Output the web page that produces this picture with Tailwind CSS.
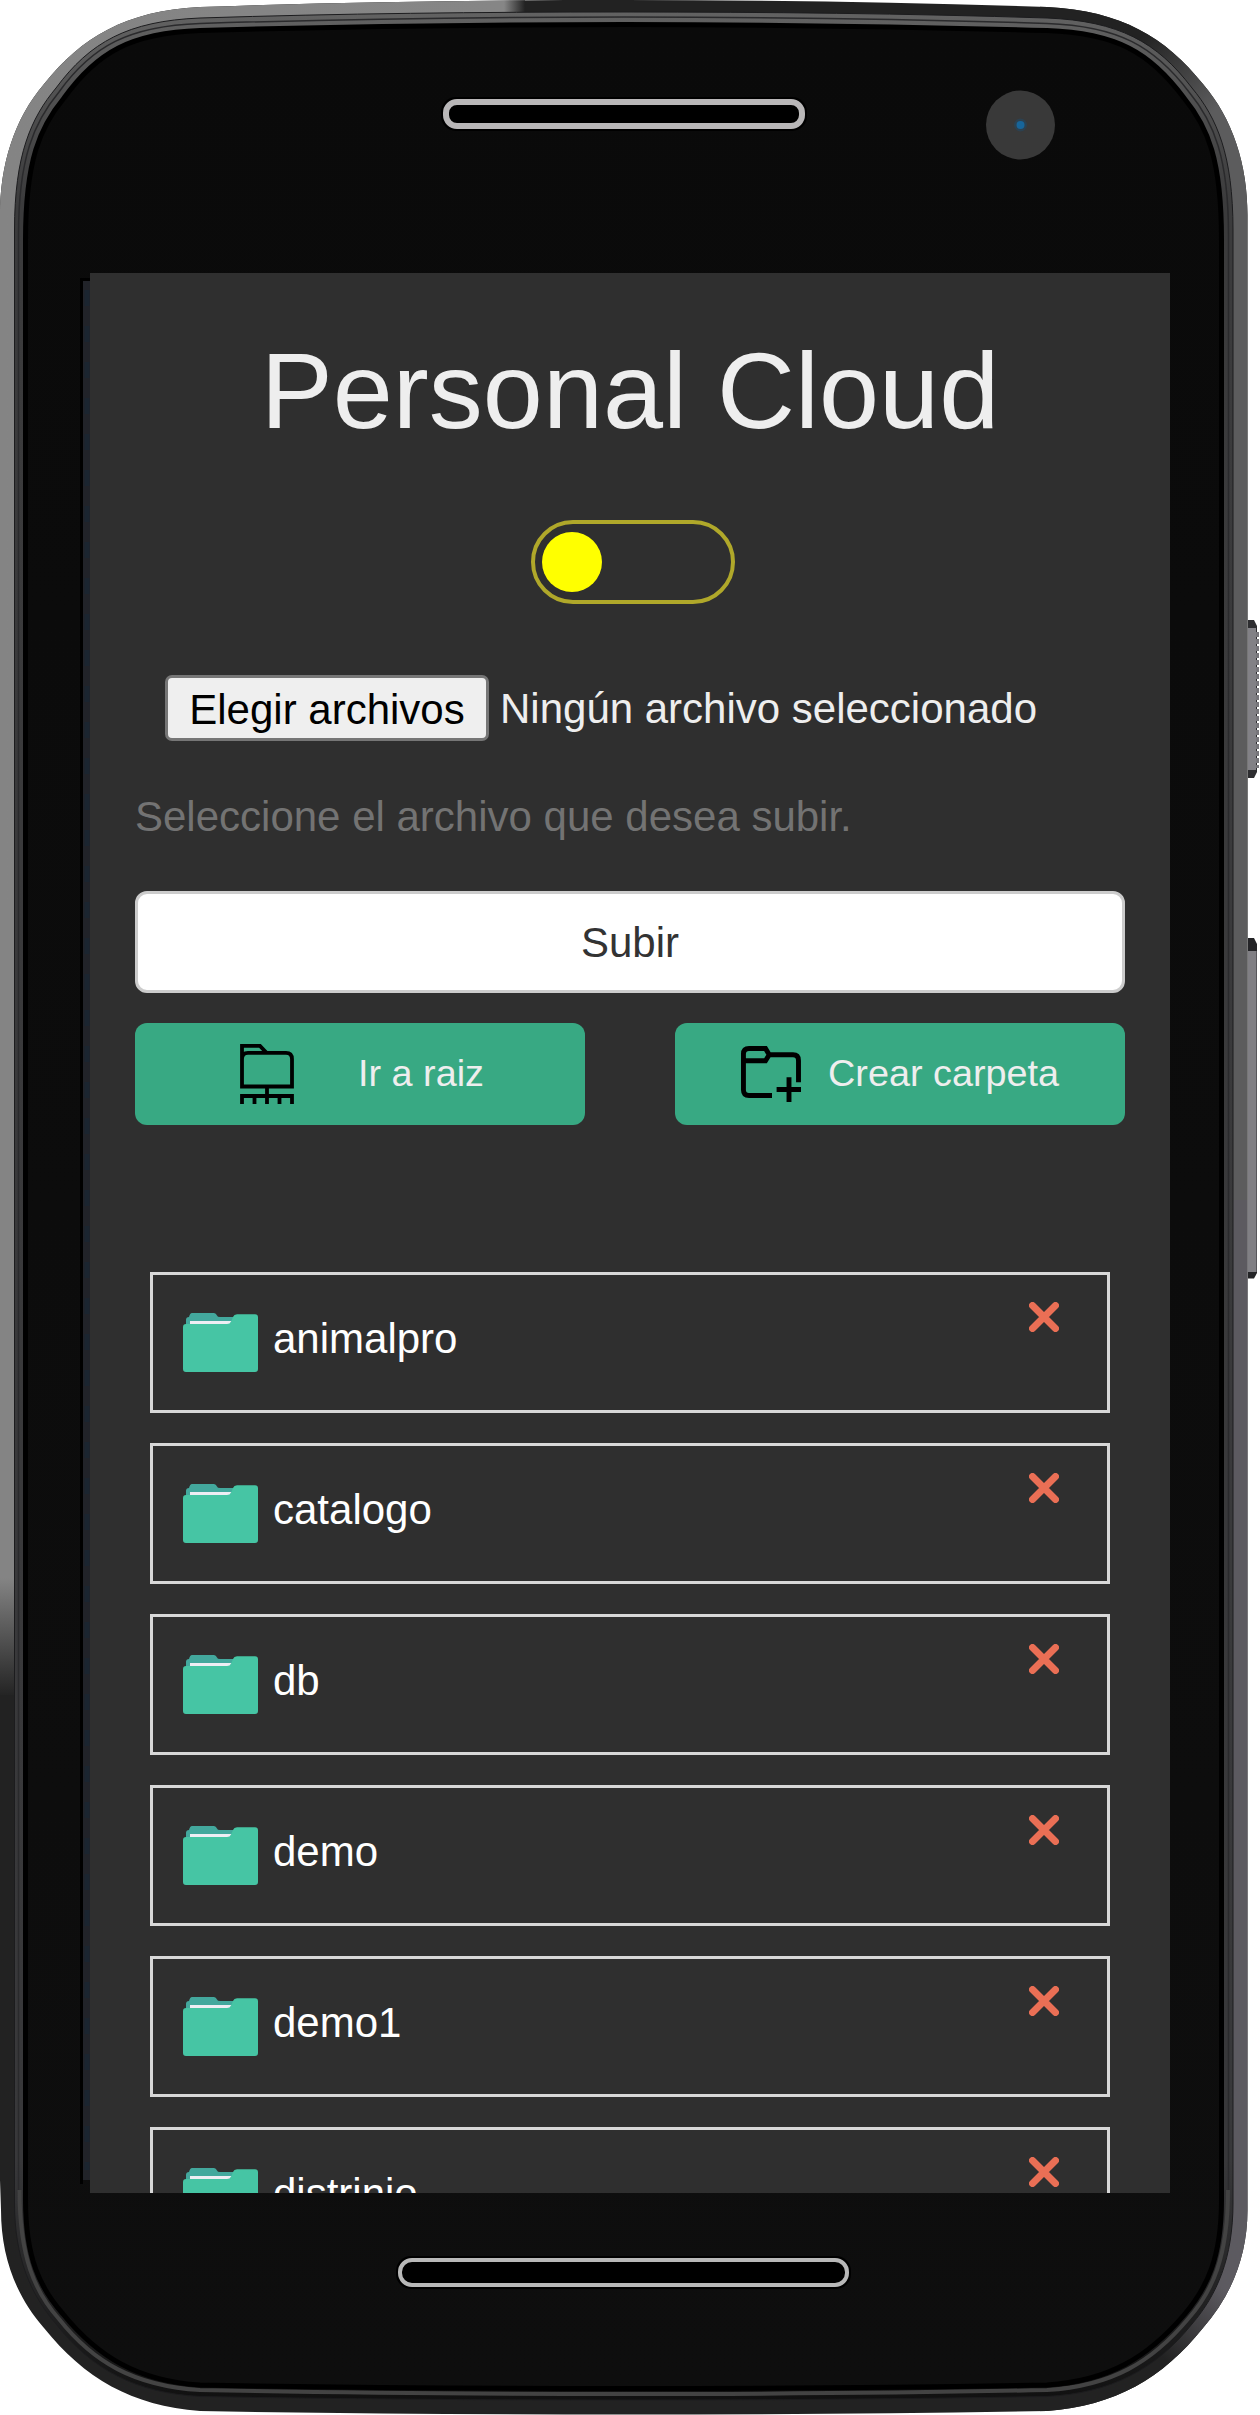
<!DOCTYPE html>
<html lang="es">
<head>
<meta charset="utf-8">
<title>Personal Cloud</title>
<script src="https://cdn.jsdelivr.net/npm/@tailwindcss/browser@4"></script>
</head>
<body class="bg-white font-['Liberation_Sans',Arial,sans-serif]">
<div class="relative w-[1260px] h-[2415px] overflow-hidden">
  <!-- Phone body -->
  <svg class="absolute inset-0" width="1260" height="2415" viewBox="0 0 1260 2415" fill="none">
    <defs>
      <path id="body" d="M0 215C0 165 14 119 44 84C82 37 125 11 200 7C340 2 480 0 624 0C767 0 907 2 1047 7C1122 11 1165 37 1203 84C1233 119 1247.500 165 1247.500 215V2210C1247.500 2255 1232 2295 1203 2328C1163 2378 1115 2406 1047 2411C907 2413.500 767 2414.500 624 2414.500C480 2414.500 340 2413.500 200 2411C132 2406 84 2378 44 2328C15 2295 1 2255 1 2210L0 2180Z"/>
      <clipPath id="clip"><use href="#body"/></clipPath>
      <linearGradient id="topFade" x1="0" x2="1"><stop offset="0" stop-color="#848484"/><stop offset=".96" stop-color="#868686"/><stop offset="1" stop-color="#222"/></linearGradient>
      <linearGradient id="leftFade" x1="0" y1="0" x2="0" y2="1"><stop offset="0" stop-color="#848484"/><stop offset=".1" stop-color="#848484"/><stop offset="1" stop-color="#242424"/></linearGradient>
      <linearGradient id="rightTop" gradientUnits="userSpaceOnUse" x1="1150" y1="30" x2="1215" y2="110"><stop offset="0" stop-color="#222"/><stop offset="1" stop-color="#5c5c5d"/></linearGradient>
      <linearGradient id="rightBot" gradientUnits="userSpaceOnUse" x1="1225" y1="2290" x2="1165" y2="2360"><stop offset="0" stop-color="#5c5a60"/><stop offset="1" stop-color="#222"/></linearGradient>
      <linearGradient id="ring" x1="0" y1="0" x2="0" y2="1"><stop offset="0" stop-color="#626262"/><stop offset=".08" stop-color="#3b3b3c"/><stop offset=".9" stop-color="#38383a"/><stop offset="1" stop-color="#111"/></linearGradient>
      <linearGradient id="glass" x1="0" y1="0" x2="0" y2="1"><stop offset="0" stop-color="#0a0a0a"/><stop offset="1" stop-color="#0e0e0e"/></linearGradient>
    </defs>
    <g clip-path="url(#clip)">
      <rect width="1260" height="2415" fill="#222"/>
      <rect width="525" height="1000" fill="url(#topFade)"/>
      <rect y="900" width="30" height="670" fill="#848484"/>
      <rect y="1565" width="30" height="130" fill="url(#leftFade)"/>
      <rect x="1040" width="210" height="1200" fill="url(#rightTop)"/>
      <rect x="1040" y="1200" width="210" height="1215" fill="url(#rightBot)"/>
    </g>
    <path fill="url(#ring)" stroke="#1c1c1e" stroke-width="1" d="M14.500 230C14.500 155 31 118 56 88C90 42 128 21 200 18C340 13.500 480 12 624 12C767 12 907 13.500 1047 18C1119 21 1157 42 1192 88C1217 118 1233 155 1233 230V2203C1233 2258 1217 2295 1192 2324C1155 2370 1111 2393 1047 2396.500C907 2399 767 2400 624 2400C480 2400 340 2399 200 2396.500C136 2393 92 2370 56 2324C31 2295 14.500 2258 14.500 2203Z"/>
    <path stroke="#2a2a2c" stroke-width="1.500" d="M18.500 2200V235C18.500 158 34 122 59 92C92 46 129 26 200 23.500C340 19 480 17 624 17C767 17 907 19 1047 23.500C1118 26 1154 46 1189 92C1214 122 1228.500 158 1228.500 235V2190"/>
    <path stroke="#434343" stroke-width="4" d="M19.500 2190C19.500 2258 35 2292 59 2319C93 2362 134 2386 200 2390C340 2393 480 2394 624 2394C767 2394 907 2393 1047 2390C1112 2386 1152 2362 1188 2319C1212 2292 1228 2258 1228 2190"/>
    <path fill="url(#glass)" stroke="#000" stroke-width="5" d="M25.500 240C25.500 160 40 127 64 98C97 52 131 33 200 30.500C340 26.500 480 24.500 624 24.500C767 24.500 907 26.500 1047 30.500C1116 33 1150 52 1184 98C1208 127 1221.500 160 1221.500 240V2200C1221.500 2258 1207 2288 1184 2315C1148 2357 1109 2381 1047 2385C907 2387.500 767 2388.500 624 2388.500C480 2388.500 340 2387.500 200 2385C138 2381 98 2357 63 2314C40 2288 25.500 2258 25.500 2200Z"/>
    <!-- Glass edge left of the display -->
    <path d="M81.500 2184V279.500H92" stroke="#000" stroke-width="3"/>
    <rect x="83" y="281" width="8" height="1899" fill="#212329"/>
    <path d="M87 290V2170" stroke="#1b2530" stroke-width="5" stroke-dasharray="16 20"/>
    <!-- Side buttons -->
    <path d="M1248 620H1254L1257 626V772L1254 778H1248Z" fill="#2d2d30"/>
    <path d="M1248 628H1256V770H1248Z" fill="#828186"/>
    <path d="M1257.500 632V768" stroke="#77767b" stroke-width="3" stroke-dasharray="5 2"/>
    <path d="M1248 938H1254L1257 944V1273L1254 1278.500H1248Z" fill="#242427"/>
    <path d="M1248 951H1256V1272H1248Z" fill="#807f84"/>
    <path d="M1256.500 951V1272" stroke="#57565b"/>
    <!-- Speakers and camera -->
    <rect x="441" y="97" width="366" height="34" rx="15" fill="#000"/>
    <rect x="446" y="102" width="356" height="24" rx="11" fill="#000" stroke="#b9b7b8" stroke-width="6"/>
    <rect x="396" y="2256" width="455" height="33" rx="15" fill="#000"/>
    <rect x="400" y="2260" width="447" height="25" rx="12" fill="#000" stroke="#b8b8b8" stroke-width="4"/>
    <circle cx="1020.500" cy="125" r="34.500" fill="#393939"/>
    <circle cx="1020.500" cy="125" r="6.500" fill="#2c4150"/>
    <circle cx="1020.500" cy="125" r="4" fill="#17659a"/>
  </svg>

  <!-- Display -->
  <main class="absolute left-[90px] top-[273px] w-[1080px] h-[1920px] overflow-hidden bg-[#2f2f2f] px-[45px] pt-[58px] text-[#eee] text-[42px] leading-[60px]">
    <h1 class="text-center text-[108px] leading-[120px]">Personal Cloud</h1>

    <div class="mt-[69px] ml-[396px] flex h-[84px] w-[204px] items-center rounded-full border-4 border-[#b0a82a] pl-[7px]">
      <span class="size-[60px] rounded-full bg-[#ff0]"></span>
    </div>

    <div class="mt-[71px] ml-[30px] flex h-[66px] items-center gap-[11px] whitespace-nowrap">
      <button class="h-[66px] w-[324px] rounded-[7px] border-3 border-[#767676] bg-[#efefef] pt-0.5 text-black leading-[60px]">Elegir archivos</button>
      <span class="pt-0.5">Ningún archivo seleccionado</span>
    </div>
    <p class="mt-[46px] text-[#737373]">Seleccione el archivo que desea subir.</p>

    <button class="mt-[44px] block h-[102px] w-full rounded-xl border-3 border-[#ccc] bg-white pt-0.5 text-[#333]">Subir</button>

    <div class="mt-[30px] flex justify-between text-[37.8px] leading-[54px]">
      <button class="flex h-[102px] w-[450px] items-center rounded-xl bg-[#38a983] pl-[105px]">
        <svg width="54" height="60" viewBox="0 0 54 60" fill="none" stroke="#000" stroke-width="3.800">
          <path d="M2 42.500V1.900H20L26.500 8.800H46Q52 8.800 52 15V42.500ZM2 15Q2 8.800 8 8.800H27"/>
          <path d="M27 42.500V60M2 60V52H52V60M14.500 52V60M39.500 52V60"/>
        </svg>
        <span class="ml-16 pb-0.5">Ir a raiz</span>
      </button>
      <button class="flex h-[102px] w-[450px] items-center rounded-xl bg-[#38a983] pl-[66px]">
        <svg width="60" height="56" viewBox="0 0 60 56" fill="none" stroke="#000" stroke-width="4.900">
          <path d="M31 49.500H8Q2.450 49.500 2.450 44V8Q2.450 2.450 8 2.450H24.500L28.200 8.800L24.500 14.700H3M28 8.800H52Q57.500 8.800 57.500 14.500V36.300M35.600 43.500H60M48 31.300V56"/>
        </svg>
        <span class="ml-[27px] pb-0.5">Crear carpeta</span>
      </button>
    </div>

    <ul id="list" class="mx-[15px] mt-[147px] flex flex-col gap-[30px] text-white"></ul>
  </main>
</div>

<template id="row">
  <li class="flex h-[141px] shrink-0 items-start border-3 border-[#d8d8d8] pl-[30px] pr-12">
    <svg class="mt-[38px]" width="75" height="59" viewBox="0 0 75 59">
      <path fill="#43a89d" d="M3 14V7Q3 4 6 4Q7 0 9 0H31Q33 0 34 2.500Q34.500 4 37 4H55V14Z"/>
      <path fill="#eeeef4" d="M7 8H50V12H7Z"/>
      <path fill="#46c5a4" d="M0 14Q0 11 3 11H44Q47 11 48 8.500L50 4Q51 1.300 54 1.300H72Q75 1.300 75 4.500V56Q75 59 72 59H3Q0 59 0 56Z"/>
    </svg>
    <span class="ml-[15px] mt-[34px]"></span>
    <svg class="ml-auto mt-[27px]" width="30" height="30" viewBox="0 0 30 30" fill="none" stroke="#ea6f55" stroke-width="7" stroke-linecap="round"><path d="M3.500 3.500L26.500 26.500M26.500 3.500L3.500 26.500"/></svg>
  </li>
</template>
<script>
  const list = document.getElementById('list');
  const row = document.getElementById('row');
  for (const name of ['animalpro', 'catalogo', 'db', 'demo', 'demo1', 'distrinio']) {
    const item = row.content.cloneNode(true);
    item.querySelector('span').textContent = name;
    list.append(item);
  }
</script>
</body>
</html>
